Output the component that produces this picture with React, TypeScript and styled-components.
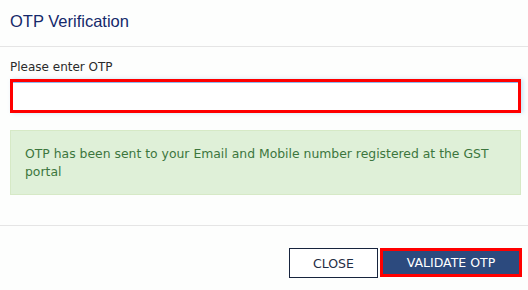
import React from "react";
import styled, { createGlobalStyle } from "styled-components";

const Global = createGlobalStyle`
  html, body { margin: 0; padding: 0; background: #fdfefd; }
  * { box-sizing: border-box; }
`;

const Modal = styled.div`
  width: 528px;
  height: 290px;
  display: flex;
  flex-direction: column;
  background: #fdfefd;
  font-family: "DejaVu Sans", Verdana, sans-serif;
`;

const Header = styled.div`
  height: 47px;
  padding: 11px 10px 0;
  border-bottom: 1px solid #e5e5e5;
`;

const Title = styled.h4`
  margin: 0;
  font-family: "Liberation Sans", Arial, sans-serif;
  font-weight: normal;
  font-size: 16.5px;
  line-height: 20px;
  color: #15296b;
`;

const Body = styled.div`
  padding: 13px 7px 0 10px;
  display: flex;
  flex-direction: column;
  height: 179px;
  border-bottom: 1px solid #e5e5e5;
`;

const Label = styled.label`
  font-size: 12px;
  line-height: 15px;
  color: #2b2b2b;
  margin-bottom: 4px;
`;

const Input = styled.input`
  display: block;
  width: 511px;
  height: 34px;
  border: 3px solid #ff0000;
  background: #fff;
  box-shadow: inset 0 1px 0 #8fb8ee, 2px 0 4px rgba(102, 175, 233, 0.35);
  outline: none;
  padding: 0 8px;
`;

const Alert = styled.div`
  margin-top: 17px;
  width: 511px;
  padding: 14px 14px 13px;
  background: #dff0d8;
  border: 1px solid #d6e9c6;
  color: #3c763d;
  font-size: 12.4px;
  line-height: 18px;
`;

const Footer = styled.div`
  display: flex;
  justify-content: flex-end;
  gap: 2px;
  padding: 22px 6px 0 0;
`;

const Button = styled.button<{ $primary?: boolean }>`
  height: 30px;
  padding: 0;
  font-family: "DejaVu Sans", Verdana, sans-serif;
  font-size: 12.5px;
  cursor: pointer;
  ${(p) =>
    p.$primary
      ? `
    width: 142px;
    height: 29px;
    background: #2c4a7e;
    color: #fff;
    border: 3px solid #ff0000;
    box-shadow: inset 0 0 0 1px #2c4a7e;
  `
      : `
    width: 89px;
    background: #fff;
    color: #1f2d44;
    border: 1px solid #17243d;
  `}
`;

export default function App() {
  return (
    <>
      <Global />
      <Modal>
        <Header>
          <Title>OTP Verification</Title>
        </Header>
        <Body>
          <Label>Please enter OTP</Label>
          <Input type="text" />
          <Alert>
            OTP has been sent to your Email and Mobile number registered at the GST portal
          </Alert>
        </Body>
        <Footer>
          <Button>CLOSE</Button>
          <Button $primary>VALIDATE OTP</Button>
        </Footer>
      </Modal>
    </>
  );
}
